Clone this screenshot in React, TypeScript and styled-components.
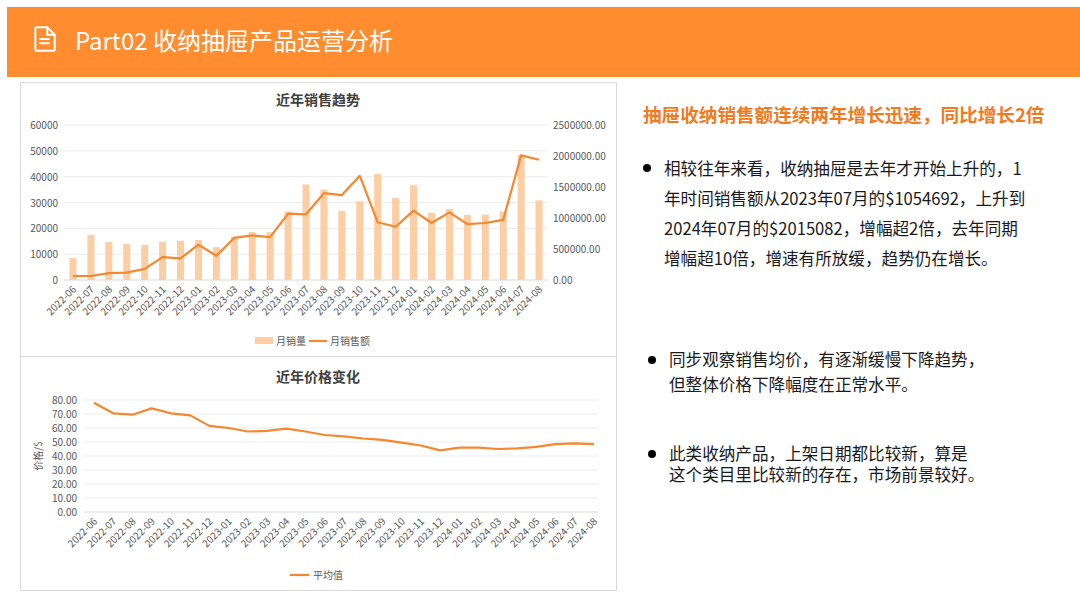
import React from 'react';
import styled, { createGlobalStyle } from 'styled-components';

const GlobalStyle = createGlobalStyle`
  html, body { margin: 0; padding: 0; background: #fff; }
  body { font-family: "Noto Sans CJK SC", "Noto Sans", sans-serif; }
`;

const months = [
  '2022-06', '2022-07', '2022-08', '2022-09', '2022-10', '2022-11', '2022-12',
  '2023-01', '2023-02', '2023-03', '2023-04', '2023-05', '2023-06', '2023-07', '2023-08', '2023-09', '2023-10', '2023-11', '2023-12',
  '2024-01', '2024-02', '2024-03', '2024-04', '2024-05', '2024-06', '2024-07', '2024-08',
];
const volume = [8500, 17500, 14700, 14000, 13600, 14800, 15200, 15500, 12700, 16800, 18600, 18500, 26500, 37000, 35000, 26800, 30500, 41000, 31700, 36700, 26000, 27500, 25200, 25300, 26500, 48500, 30800];
const revenue = [6.5, 6.5, 11, 12, 18, 37, 35, 57, 39, 68, 72, 69, 107, 106, 140, 137, 168, 93, 86, 112, 92, 109, 90, 92, 97, 201, 194].map((v) => v * 10000);
const price = [78, 70.5, 69.5, 74, 70.5, 69, 61.5, 60, 57.5, 58, 59.5, 57.5, 55, 54, 52.5, 51.5, 49.5, 47.5, 44, 46, 46, 45, 45.5, 46.5, 48.5, 49, 48.5];

const ORANGE = '#f5872f';
const AXIS = '#595959';

const Page = styled.div`
  width: 1080px;
  height: 605px;
  padding-top: 7px;
  box-sizing: border-box;
  overflow: hidden;
`;

const Header = styled.header`
  margin-left: 7px;
  height: 70px;
  background: #ff8c2e;
  display: flex;
  align-items: center;
  padding: 0 0 6px 24px;
  box-sizing: border-box;
  gap: 16px;
  color: #fff;
  font-size: 24px;
`;

const Body = styled.div`
  display: flex;
  margin-top: 5px;
`;

const LeftCol = styled.div`
  margin-left: 20px;
  width: 597px;
  display: flex;
  flex-direction: column;
`;

const Panel = styled.div<{ $h: number; $top?: boolean }>`
  height: ${(p) => p.$h}px;
  border: 1px solid #d9d9d9;
  border-top: ${(p) => (p.$top ? '1px solid #d9d9d9' : 'none')};
  box-sizing: border-box;
  svg { display: block; }
`;

const RightCol = styled.div`
  margin-left: 26px;
  width: 430px;
  color: #1a1a1a;
`;

const Headline = styled.div`
  margin-top: 18px;
  color: #f07a1e;
  font-weight: 700;
  font-size: 18.6px;
  white-space: nowrap;
`;

const Bullet = styled.div<{ $mt: number; $lh: number; $indent: number }>`
  display: flex;
  margin-top: ${(p) => p.$mt}px;
  margin-left: ${(p) => p.$indent}px;
  font-size: 16.6px;
  line-height: ${(p) => p.$lh}px;
  &::before {
    content: '';
    flex: none;
    width: 8px;
    height: 8px;
    border-radius: 50%;
    background: #000;
    margin: ${(p) => p.$lh / 2 - 4}px 13px 0 0;
  }
`;

const BulletText = styled.span<{ $w?: number }>`
  width: ${(p) => (p.$w ? `${p.$w}px` : 'auto')};
`;

const font = '"Noto Sans CJK SC", "Noto Sans", sans-serif';

const DocIcon = () => (
  <svg width="28" height="28" viewBox="0 0 26 26" fill="none" stroke="#fff" strokeWidth="1.9" strokeLinejoin="round" strokeLinecap="round">
    <path d="M4 3.5 Q4 2 5.5 2 H15 L22 9 V22.5 Q22 24 20.5 24 H5.5 Q4 24 4 22.5 Z" />
    <path d="M15 2 V9 H22" />
    <path d="M8.5 13 H16.5 M8.5 17 H16.5" />
  </svg>
);

const XLabels = ({ xs, y }: { xs: number[]; y: number }) => (
  <>
    {months.map((m, i) => (
      <text key={m} x={xs[i] + 4} y={y} fontSize="10" fill={AXIS} textAnchor="end" transform={`rotate(-45 ${xs[i] + 4} ${y})`}>
        {m}
      </text>
    ))}
  </>
);

const SalesChart = () => {
  const L = 43, R = 527, T = 42, B = 197;
  const w = (R - L) / months.length;
  const xs = months.map((_, i) => L + (i + 0.5) * w);
  const yl = (v: number) => B - (v / 60000) * (B - T);
  const yr = (v: number) => B - (v / 2500000) * (B - T);
  const line = revenue.map((v, i) => `${i ? 'L' : 'M'}${xs[i].toFixed(1)},${yr(v).toFixed(1)}`).join(' ');
  return (
    <svg width="595" height="274" fontFamily={font}>
      <text x="297" y="22" textAnchor="middle" fontSize="14" fontWeight="700" fill="#404040">近年销售趋势</text>
      {[0, 1, 2, 3, 4, 5, 6].map((k) => (
        <g key={k}>
          <line x1={L} x2={R} y1={yl(k * 10000)} y2={yl(k * 10000)} stroke={k ? '#ececec' : '#d9d9d9'} />
          <text x={L - 6} y={yl(k * 10000) + 4} textAnchor="end" fontSize="10" fill={AXIS}>{k * 10000}</text>
        </g>
      ))}
      {[0, 1, 2, 3, 4, 5].map((k) => (
        <text key={k} x={R + 5} y={yr(k * 500000) + 4} fontSize="10" fill={AXIS}>{(k * 500000).toFixed(2)}</text>
      ))}
      {volume.map((v, i) => (
        <rect key={i} x={xs[i] - 3.5} y={yl(v)} width="7" height={B - yl(v)} fill="#fdcda3" />
      ))}
      <path d={line} fill="none" stroke={ORANGE} strokeWidth="2.2" strokeLinejoin="round" />
      <XLabels xs={xs} y={B + 10} />
      <rect x="234" y="254" width="18" height="7" fill="#fdcda3" />
      <text x="255" y="262" fontSize="10" fill={AXIS}>月销量</text>
      <line x1="288" x2="306" y1="258" y2="258" stroke={ORANGE} strokeWidth="2.2" />
      <text x="309" y="262" fontSize="10" fill={AXIS}>月销售额</text>
    </svg>
  );
};

const PriceChart = () => {
  const L = 63, R = 577, T = 43, B = 155;
  const step = (R - L - 14) / (months.length - 1);
  const xs = months.map((_, i) => L + 10 + i * step);
  const y = (v: number) => B - (v / 80) * (B - T);
  const line = price.map((v, i) => `${i ? 'L' : 'M'}${xs[i].toFixed(1)},${y(v).toFixed(1)}`).join(' ');
  return (
    <svg width="595" height="233" fontFamily={font}>
      <text x="297" y="25" textAnchor="middle" fontSize="14" fontWeight="700" fill="#404040">近年价格变化</text>
      {[0, 1, 2, 3, 4, 5, 6, 7, 8].map((k) => (
        <g key={k}>
          <line x1={L} x2={R} y1={y(k * 10)} y2={y(k * 10)} stroke={k ? '#ececec' : '#d9d9d9'} />
          <text x={L - 7} y={y(k * 10) + 4} textAnchor="end" fontSize="10" fill={AXIS}>{(k * 10).toFixed(2)}</text>
        </g>
      ))}
      <text x="21" y="99" textAnchor="middle" fontSize="10" fill={AXIS} transform="rotate(-90 21 99)">价格/$</text>
      <path d={line} fill="none" stroke={ORANGE} strokeWidth="2.2" strokeLinejoin="round" />
      <XLabels xs={xs} y={B + 10} />
      <line x1="269" x2="288" y1="218" y2="218" stroke={ORANGE} strokeWidth="2.2" />
      <text x="292" y="222" fontSize="10" fill={AXIS}>平均值</text>
    </svg>
  );
};

export default function App() {
  return (
    <Page>
      <GlobalStyle />
      <Header>
        <DocIcon />
        <span>Part02 收纳抽屉产品运营分析</span>
      </Header>
      <Body>
        <LeftCol>
          <Panel $h={275} $top>
            <SalesChart />
          </Panel>
          <Panel $h={234}>
            <PriceChart />
          </Panel>
        </LeftCol>
        <RightCol>
          <Headline>抽屉收纳销售额连续两年增长迅速，同比增长2倍</Headline>
          <Bullet $mt={26} $lh={30} $indent={0}>
            <BulletText $w={362}>相较往年来看，收纳抽屉是去年才开始上升的，1年时间销售额从2023年07月的$1054692，上升到2024年07月的$2015082，增幅超2倍，去年同期增幅超10倍，增速有所放缓，趋势仍在增长。</BulletText>
          </Bullet>
          <Bullet $mt={74} $lh={25} $indent={5}>
            <BulletText>同步观察销售均价，有逐渐缓慢下降趋势，<br />但整体价格下降幅度在正常水平。</BulletText>
          </Bullet>
          <Bullet $mt={46} $lh={21} $indent={5}>
            <BulletText>此类收纳产品，上架日期都比较新，算是<br />这个类目里比较新的存在，市场前景较好。</BulletText>
          </Bullet>
        </RightCol>
      </Body>
    </Page>
  );
}
